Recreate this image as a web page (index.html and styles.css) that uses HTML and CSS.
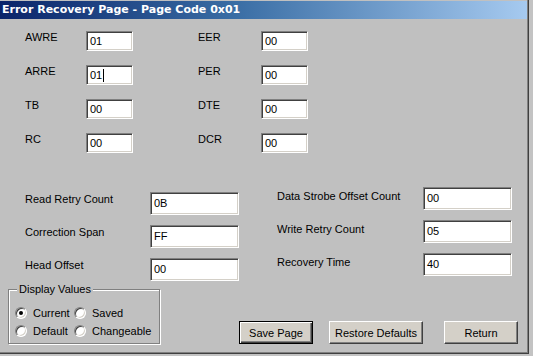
FILE: index.html
```html
<!DOCTYPE html>
<html>
<head>
<meta charset="utf-8">
<link rel="stylesheet" href="styles.css">
</head>
<body>
<div class="window">
  <div class="titlebar">Error Recovery Page - Page Code 0x01</div>
  <div class="content">
    <div class="top-grid">
      <span class="lbl">AWRE</span><span class="field small">01</span><span></span>
      <span class="lbl">EER</span><span class="field small">00</span>
      <span class="lbl">ARRE</span><span class="field small">01<i class="caret"></i></span><span></span>
      <span class="lbl">PER</span><span class="field small">00</span>
      <span class="lbl">TB</span><span class="field small">00</span><span></span>
      <span class="lbl">DTE</span><span class="field small">00</span>
      <span class="lbl">RC</span><span class="field small">00</span><span></span>
      <span class="lbl">DCR</span><span class="field small">00</span>
    </div>
    <div class="mid">
      <div class="col col-left">
        <div class="row"><span class="lbl">Read Retry Count</span><span class="field wide">0B</span></div>
        <div class="row"><span class="lbl">Correction Span</span><span class="field wide">FF</span></div>
        <div class="row"><span class="lbl">Head Offset</span><span class="field wide">00</span></div>
      </div>
      <div class="col col-right">
        <div class="row"><span class="lbl">Data Strobe Offset Count</span><span class="field wide">00</span></div>
        <div class="row"><span class="lbl">Write Retry Count</span><span class="field wide">05</span></div>
        <div class="row"><span class="lbl">Recovery Time</span><span class="field wide">40</span></div>
      </div>
    </div>
    <div class="footer">
      <fieldset class="group">
        <legend>Display Values</legend>
        <div class="radios">
          <span class="radio"><i class="dot checked"></i>Current</span>
          <span class="radio"><i class="dot"></i>Saved</span>
          <span class="radio"><i class="dot"></i>Default</span>
          <span class="radio"><i class="dot"></i>Changeable</span>
        </div>
      </fieldset>
      <div class="buttons">
        <span class="btn default">Save Page</span>
        <span class="btn restore">Restore Defaults</span>
        <span class="btn ret">Return</span>
      </div>
    </div>
  </div>
</div>
</body>
</html>
```
FILE: styles.css
```css
html, body {
  margin: 0;
  padding: 0;
  background: #c3c3c3;
}
body {
  width: 533px;
  height: 356px;
  overflow: hidden;
  font-family: "Liberation Sans", Arial, sans-serif;
  font-size: 11px;
  color: #000;
}
.window {
  width: 529px;
  height: 354px;
  border-right: 1px solid #404040;
  border-bottom: 1px solid #404040;
  box-shadow: inset -1px -1px 0 #808080;
  background: #c0c0c0;
  box-sizing: border-box;
  padding-top: 1px;
}
.titlebar {
  height: 18px;
  line-height: 18px;
  background: linear-gradient(to right, #0a246a 0%, #3a6ea5 45%, #a6caf0 100%);
  color: #fff;
  font-weight: bold;
  font-size: 11px;
  font-family: Tahoma, "DejaVu Sans", "Liberation Sans", sans-serif;
  padding-left: 2px;
  margin-right: 1px;
  white-space: nowrap;
}
.top-grid {
  display: grid;
  grid-template-columns: 61px 47px 65px 63px 47px;
  grid-auto-rows: 20px;
  row-gap: 14px;
  padding-left: 25px;
  margin-top: 12px;
}
.lbl {
  line-height: 13px;
  white-space: nowrap;
}
.field {
  display: block;
  box-sizing: border-box;
  background: #fff;
  border-style: solid;
  border-width: 1px;
  border-color: #808080 #ffffff #ffffff #808080;
  box-shadow: inset 1px 1px 0 #404040, inset -1px -1px 0 #d4d0c8;
  padding: 3px 0 0 3px;
  line-height: 13px;
  position: relative;
}
.field.small {
  width: 47px;
  height: 20px;
}
.field.wide {
  width: 89px;
  height: 23px;
  padding-top: 4px;
}
.caret {
  display: inline-block;
  width: 1px;
  height: 13px;
  background: #000;
  vertical-align: top;
  margin-left: 1px;
}
.mid {
  display: flex;
  margin-top: 34px;
}
.col {
  display: flex;
  flex-direction: column;
  row-gap: 10px;
}
.col .row {
  display: flex;
  align-items: flex-start;
}
.col-left {
  width: 252px;
  padding-left: 25px;
  padding-top: 5px;
}
.col-left .lbl {
  width: 125px;
  padding-top: 1px;
}
.col-right .lbl {
  width: 146px;
  padding-top: 3px;
}
.footer {
  display: flex;
  margin-top: 2px;
}
.group {
  margin: 0 0 0 8px;
  padding: 8px 0 0 6px;
  width: 152px;
  height: 61px;
  box-sizing: border-box;
  border: 1px solid #808080;
  box-shadow: 1px 1px 0 #fff, inset 1px 1px 0 #fff;
}
.group legend {
  padding: 0 2px;
  margin-left: 2px;
  line-height: 13px;
  background: #c0c0c0;
}
.radios {
  display: grid;
  grid-template-columns: 59px auto;
  grid-auto-rows: 18px;
}
.radio {
  display: flex;
  align-items: center;
  gap: 6px;
  white-space: nowrap;
}
.dot {
  display: block;
  box-sizing: border-box;
  width: 12px;
  height: 12px;
  border-radius: 50%;
  background: #fff;
  border: 1px solid;
  border-color: #808080 #ffffff #ffffff #808080;
  box-shadow: inset 1px 1px 0 #404040, inset -1px -1px 0 #d4d0c8;
  position: relative;
}
.dot.checked::after {
  content: "";
  position: absolute;
  left: 3px;
  top: 3px;
  width: 4px;
  height: 4px;
  border-radius: 50%;
  background: #000;
}
.buttons {
  display: flex;
  align-self: flex-end;
  margin-left: 79px;
  margin-bottom: 0;
}
.btn {
  display: flex;
  align-items: center;
  justify-content: center;
  box-sizing: border-box;
  height: 23px;
  background: #d4d0c8;
  border: 1px solid;
  border-color: #ffffff #404040 #404040 #ffffff;
  box-shadow: inset -1px -1px 0 #808080;
}
.btn.default {
  width: 74px;
  border: 1px solid #000;
  box-shadow: inset 1px 1px 0 #fff, inset -1px -1px 0 #404040, inset -2px -2px 0 #808080;
}
.btn.restore {
  width: 94px;
  margin-left: 16px;
}
.btn.ret {
  width: 74px;
  margin-left: 21px;
}
```
